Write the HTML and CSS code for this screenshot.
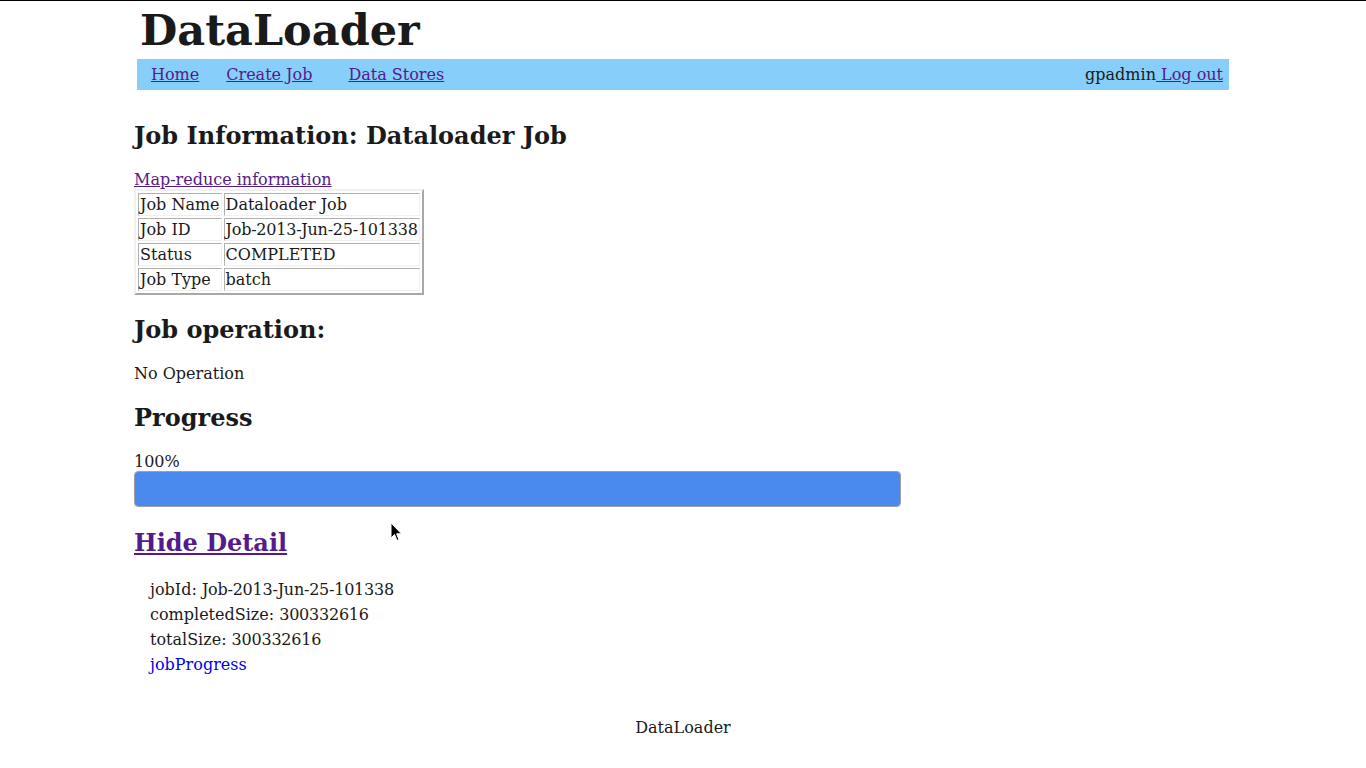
FILE: index.html
```html
<!DOCTYPE html>
<html>
<head>
<meta charset="utf-8">
<title>DataLoader</title>
<link rel="stylesheet" href="styles.css">
</head>
<body>
<div class="page">
  <h1 class="title">DataLoader</h1>
  <div class="nav">
    <div class="nav-left">
      <a href="#" class="nav-home">Home</a>
      <a href="#" class="nav-create">Create Job</a>
      <a href="#">Data Stores</a>
    </div>
    <div class="nav-right">gpadmin<a href="#"> Log out</a></div>
  </div>

  <h2 class="first">Job Information: Dataloader Job</h2>
  <a href="#" class="mr-link">Map-reduce information</a>
  <table class="info">
    <tr><td>Job Name</td><td>Dataloader Job</td></tr>
    <tr><td>Job ID</td><td><span class="num">Job-2013-Jun-25-101338</span></td></tr>
    <tr><td>Status</td><td>COMPLETED</td></tr>
    <tr><td>Job Type</td><td>batch</td></tr>
  </table>

  <h2 class="after-table">Job operation:</h2>
  <p>No Operation</p>

  <h2>Progress</h2>
  <div class="pct">100%</div>
  <div class="bar"><div class="fill" style="width:100%"></div></div>

  <h2 class="hide"><a href="#">Hide Detail</a></h2>
  <ul class="detail">
    <li>jobId: <span class="num">Job-2013-Jun-25-101338</span></li>
    <li>completedSize: <span class="num">300332616</span></li>
    <li>totalSize: <span class="num">300332616</span></li>
    <li><a href="#" class="blue">jobProgress</a></li>
  </ul>

  <div class="footer">DataLoader</div>
</div>
<svg class="cursor" width="14" height="22" viewBox="0 0 14 22"><path d="M1 1 L1 16 L4.5 12.5 L7 18.5 L9 17.6 L6.6 11.8 L11.5 11.8 Z" fill="#000" stroke="#fff" stroke-width="1"/></svg>
</body>
</html>
```
FILE: styles.css
```css
html, body {
  margin: 0;
  padding: 0;
  background: #fff;
}
body {
  border-top: 1px solid #000;
  font-family: "DejaVu Serif", serif;
  font-size: 16px;
  color: #1a1a1a;
  position: relative;
}
a {
  color: #551a8b;
}
.page {
  width: 1098px;
  margin: 0 auto;
}
.title {
  font-size: 43px;
  font-weight: bold;
  margin: 4px 0 0 6px;
  line-height: 51px;
}
.nav {
  margin: 3px 3px 0 3px;
  height: 31px;
  background: #87cefa;
  display: flex;
  justify-content: space-between;
  align-items: center;
  padding: 0 6px 0 14px;
}
.nav-left {
  display: flex;
}
.nav-home {
  margin-right: 27px;
}
.nav-create {
  margin-right: 36px;
}
h2 {
  font-size: 24px;
  font-weight: bold;
  margin: 20px 0;
  line-height: 28px;
}
h2.first {
  margin-top: 32px;
}
h2.after-table {
  margin-top: 21px;
}
.mr-link {
  display: block;
  line-height: 19px;
}
.num {
  letter-spacing: -0.23px;
}
.info {
  border-collapse: separate;
  border-spacing: 2px;
  border-style: solid;
  border-width: 2px;
  border-color: #f0f0f0 #a8a8a8 #a8a8a8 #f0f0f0;
}
.info td {
  padding: 1px;
  line-height: 19px;
  border-style: solid;
  border-width: 1px;
  border-color: #b0b0b0 #f0f0f0 #f0f0f0 #b0b0b0;
}
p {
  margin: 16px 0 21px 0;
  line-height: 19px;
}
.pct {
  line-height: 19px;
  margin-top: 1px;
}
.bar {
  width: 765px;
  height: 34px;
  border: 1px solid #a0a0a0;
  border-radius: 4px;
  overflow: hidden;
  background: #eee;
}
.fill {
  height: 100%;
  background: #4a8aef;
}
h2.hide {
  margin-top: 22px;
}
.detail {
  list-style: none;
  margin: 20px 0 0 0;
  padding: 0 0 0 16px;
  line-height: 25px;
}
.blue {
  color: #0000ee;
  text-decoration: none;
}
.footer {
  text-align: center;
  margin-top: 41px;
  line-height: 19px;
}
.cursor {
  position: absolute;
  left: 390px;
  top: 521px;
}
```
